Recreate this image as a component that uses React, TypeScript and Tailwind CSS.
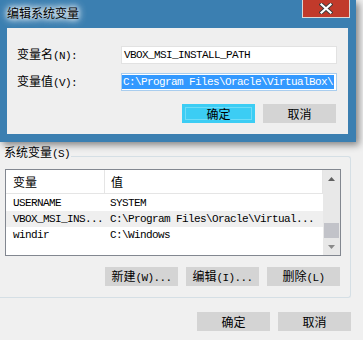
import React from "react";

const mono = "font-['Liberation_Mono','DejaVu_Sans_Mono',monospace] text-[11px] tracking-[-0.6px]";

function Btn({ label, primary = false }: { label: React.ReactNode; primary?: boolean }) {
  return (
    <div
      className={
        "relative flex h-[19px] w-[73px] items-center justify-center leading-[19px] " +
        (primary ? "bg-[#3ccdf4]" : "bg-[#d4d4d4]")
      }
    >
      {primary && <div className="absolute inset-[3px] border border-[#6fdcf7]" />}
      <span className="relative">{label}</span>
    </div>
  );
}

function UpArrow({ color }: { color: string }) {
  return (
    <svg width="7" height="4" viewBox="0 0 7 4">
      <polygon points="0,4 7,4 3.5,0" fill={color} />
    </svg>
  );
}
function DownArrow({ color }: { color: string }) {
  return (
    <svg width="7" height="4" viewBox="0 0 7 4">
      <polygon points="0,0 7,0 3.5,4" fill={color} />
    </svg>
  );
}

function Asc({ t }: { t: string }) {
  return <span className={mono}>{t}</span>;
}

export default function App() {
  const rows = [
    { n: "USERNAME", v: "SYSTEM", hl: false },
    { n: "VBOX_MSI_INS...", v: "C:\\Program Files\\Oracle\\Virtual...", hl: true },
    { n: "windir", v: "C:\\Windows", hl: false },
  ];
  return (
    <div className="relative h-[340px] w-[363px] overflow-hidden bg-[#f0f0f0] font-['Noto_Sans_CJK_SC',sans-serif] text-[12px] text-black">
      {/* underlying window content */}
      <div className="flex flex-col pt-[145px]">
        {/* group box */}
        <div className="mr-[12px] flex flex-col">
          <div className="flex h-[14px]">
            <span className="pl-[4px] pr-[1px] leading-[13px]">
              系统变量<Asc t="(S)" />
            </span>
            <div className="h-[3px] flex-1 self-end rounded-tr-[3px] border-r border-t border-[#d5dfe5]" />
          </div>
          <div className="flex flex-col rounded-br-[3px] border-b border-r border-[#d5dfe5] pb-[11px] pl-[5px] pr-[9px] pt-[10px]">
            {/* list view */}
            <div className="flex h-[87px] w-[336px] border border-[#828790] bg-white">
              <div className="flex flex-1 flex-col">
                <div className="flex h-[24px] border-b border-[#e5e5e5]">
                  <div className="w-[99px] border-r border-[#e5e5e5] pl-[7px] leading-[23px]">变量</div>
                  <div className="flex-1 border-r border-[#e5e5e5] pl-[6px] leading-[23px]">值</div>
                </div>
                <div className="flex flex-col pt-[1px]">
                  {rows.map((r) => (
                    <div key={r.n} className={"flex h-[16px] items-center " + (r.hl ? "bg-[#efefef]" : "")}>
                      <div className={"w-[99px] pl-[7px] " + mono}>{r.n}</div>
                      <div className={"flex-1 pl-[5px] " + mono}>{r.v}</div>
                    </div>
                  ))}
                </div>
              </div>
              {/* scrollbar */}
              <div className="flex w-[17px] flex-col bg-[#e8e8e8]">
                <div className="flex h-[17px] items-center justify-center">
                  <UpArrow color="#606060" />
                </div>
                <div className="flex flex-1 flex-col justify-end">
                  <div className="mx-[1px] h-[15px] bg-[#c2c3c9]" />
                </div>
                <div className="flex h-[17px] items-center justify-center">
                  <DownArrow color="#8a8a8a" />
                </div>
              </div>
            </div>
            <div className="mt-[11px] flex justify-end gap-[8px] pr-[1px]">
              <Btn label={<>新建<Asc t="(W)..." /></>} />
              <Btn label={<>编辑<Asc t="(I)..." /></>} />
              <Btn label={<>删除<Asc t="(L)" /></>} />
            </div>
          </div>
        </div>
        <div className="mt-[14px] flex justify-end gap-[8px] pr-[12px]">
          <Btn label="确定" />
          <Btn label="取消" />
        </div>
      </div>

      {/* edit dialog window */}
      <div className="absolute left-0 top-0 flex h-[142px] w-[356px] flex-col bg-[#3b7fb1] shadow-[3px_3px_7px_rgba(0,0,0,0.45)]">
        <div className="flex h-[28px] justify-between">
          <span className="ml-[7px] mt-[6px] leading-[14px] [text-shadow:0_0_5px_#fff,0_0_8px_#fff,0_0_10px_#fff]">
            编辑系统变量
          </span>
          <div className="mr-[6px] flex h-[18px] w-[48px] items-center justify-center border-x border-b border-[#d9d9d9] bg-[#c13a2b]">
            <svg width="14" height="11" viewBox="0 0 14 11">
              <path d="M2.5 1.5 L11.5 9.5 M11.5 1.5 L2.5 9.5" stroke="#3a3a3a" strokeWidth="4" strokeLinecap="square" />
              <path d="M2.5 1.5 L11.5 9.5 M11.5 1.5 L2.5 9.5" stroke="#ffffff" strokeWidth="2.2" strokeLinecap="square" />
            </svg>
          </div>
        </div>
        <div className="ml-[7px] mr-[8px] flex h-[106px] flex-col bg-[#efefef] pt-[18px]">
          <div className="flex h-[18px] items-center pl-[10px]">
            <div className="w-[104px]">
              变量名<Asc t="(N):" />
            </div>
            <div className={"flex h-[18px] w-[216px] items-center border border-[#e2e2e2] bg-white pl-[1px] " + mono}>
              <span className="px-[1px]">VBOX_MSI_INSTALL_PATH</span>
            </div>
          </div>
          <div className="mt-[9px] flex h-[18px] items-center pl-[10px]">
            <div className="w-[104px]">
              变量值<Asc t="(V):" />
            </div>
            <div className={"flex h-[18px] w-[216px] items-center overflow-hidden whitespace-nowrap border border-[#a9cdee] bg-white " + mono}>
              <span className="h-[14px] bg-[#3399ff] px-[1px] leading-[14px] text-white">
                C:\Program Files\Oracle\VirtualBox\
              </span>
            </div>
          </div>
          <div className="mt-[13px] flex justify-end gap-[8px] pr-[12px]">
            <Btn label="确定" primary />
            <Btn label="取消" />
          </div>
        </div>
      </div>
    </div>
  );
}
